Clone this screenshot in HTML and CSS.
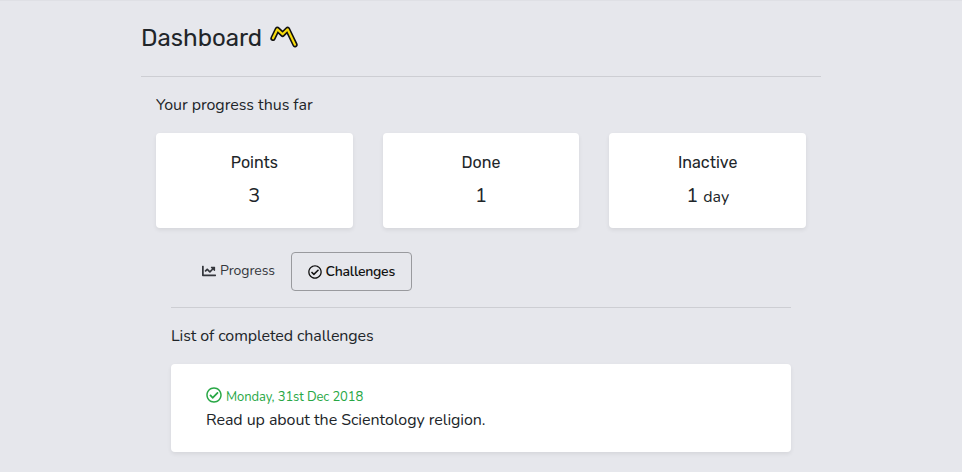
FILE: index.html
```html
<!DOCTYPE html>
<html lang="en">
<head>
<meta charset="utf-8">
<title>Dashboard</title>
<link rel="stylesheet" href="styles.css">
</head>
<body>
<svg width="0" height="0" class="sprite" aria-hidden="true">
  <symbol id="check" viewBox="0 0 512 512"><path d="M256 8C119.033 8 8 119.033 8 256s111.033 248 248 248 248-111.033 248-248S392.967 8 256 8zm0 48c110.532 0 200 89.451 200 200 0 110.532-89.451 200-200 200-110.532 0-200-89.451-200-200 0-110.532 89.451-200 200-200m140.204 130.267l-22.536-22.718c-4.667-4.705-12.265-4.736-16.97-.068L215.346 303.697l-59.792-60.277c-4.667-4.705-12.265-4.736-16.97-.069l-22.719 22.536c-4.705 4.667-4.736 12.265-.068 16.971l90.781 91.516c4.667 4.705 12.265 4.736 16.97.068l172.589-171.204c4.704-4.668 4.734-12.266.067-16.971z"/></symbol>
  <symbol id="chart" viewBox="0 0 512 512"><path d="M496 384H64V80c0-8.840-7.160-16-16-16H16C7.160 64 0 71.160 0 80v336c0 17.670 14.330 32 32 32h464c8.840 0 16-7.160 16-16v-32c0-8.840-7.160-16-16-16zM464 96H345.940c-21.380 0-32.090 25.850-16.970 40.970l32.400 32.400L288 242.750l-73.370-73.370c-12.500-12.500-32.760-12.500-45.250 0l-68.690 68.690c-6.250 6.250-6.250 16.380 0 22.630l22.620 22.620c6.250 6.250 16.380 6.250 22.630 0L192 237.250l73.370 73.370c12.500 12.500 32.760 12.500 45.250 0l96-96 32.400 32.400c15.120 15.120 40.970 4.410 40.970-16.970V112c.010-8.840-7.150-16-15.990-16z"/></symbol>
</svg>
<main class="page">
  <h1 class="title"><span>Dashboard</span>
    <svg class="mark" viewBox="0 0 30 24" aria-hidden="true"><path class="mark-edge" d="M4 13.300 8.300 4.300 13.600 9.300 18.600 4.300 26 19.700"/><path class="mark-fill" d="M4 13.300 8.300 4.300 13.600 9.300 18.600 4.300 26 19.700"/></svg>
  </h1>
  <section class="overview">
    <p>Your progress thus far</p>
    <div class="stats">
      <div class="card stat"><h2>Points</h2><p>3</p></div>
      <div class="card stat"><h2>Done</h2><p>1</p></div>
      <div class="card stat"><h2>Inactive</h2><p>1 <small>day</small></p></div>
    </div>
    <div class="details">
      <nav class="tabs">
        <a class="tab"><svg class="icon"><use href="#chart"/></svg><span>Progress</span></a>
        <a class="tab active"><svg class="icon"><use href="#check"/></svg><span>Challenges</span></a>
      </nav>
      <p class="list-lead">List of completed challenges</p>
      <article class="card challenge">
        <div class="date"><svg class="icon"><use href="#check"/></svg><span>Monday, 31st Dec 2018</span></div>
        <p>Read up about the Scientology religion.</p>
      </article>
    </div>
  </section>
</main>
</body>
</html>
```

FILE: styles.css
```css
* { box-sizing: border-box; }
body {
  margin: 0;
  height: 472px;
  overflow: hidden;
  background: #e6e7ec;
  border-top: 1px solid #dfe0e5;
  color: #212529;
  font: 400 16px/24px Nunito, Lato, sans-serif;
  letter-spacing: -.06px;
}
h1, h2, p { margin: 0; }
.sprite { position: absolute; }
.page { width: 680px; margin: 0 auto; }
.title {
  display: flex;
  height: 76px;
  padding-top: 23px;
  border-bottom: 1px solid #cdced3;
  font: 400 24px/29px Rubik, Roboto, sans-serif;
  letter-spacing: 0;
}
.mark { width: 30px; height: 24px; margin: 1px 0 0 7px; fill: none; stroke-linecap: round; stroke-linejoin: round; }
.mark-edge { stroke: #111; stroke-width: 5.400; }
.mark-fill { stroke: #f8dc0c; stroke-width: 2.200; }
.overview { padding: 16px 15px 0; }
.stats { display: grid; grid-template-columns: repeat(3, 1fr); gap: 30px; margin-top: 16px; }
.card { background: #fff; border-radius: 4px; box-shadow: 0 2px 4px rgba(0, 0, 0, .075); }
.stat { height: 95px; padding-top: 20px; text-align: center; }
.stat h2 { font: 400 16px/20px Rubik, Roboto, sans-serif; letter-spacing: 0; }
.stat p { margin-top: 8px; font-size: 20px; line-height: 30px; }
.stat small { font-size: 16px; }
.details { padding: 24px 15px 0; }
.tabs { display: flex; height: 56px; padding-left: 15px; border-bottom: 1px solid #cdced3; font-size: 14px; line-height: 21px; }
.tab { display: flex; align-items: center; height: 37px; padding: 0 16px; color: #34373c; }
.active { height: 39px; border: 1px solid #999a9e; border-radius: 4px; color: #111; font-weight: 600; letter-spacing: -.23px; }
.icon { width: 14px; height: 14px; margin-right: 4px; fill: currentColor; flex: none; }
.active .icon { margin-right: 3.500px; }
.list-lead { margin-top: 16px; letter-spacing: -.1px; }
.challenge { height: 88px; margin-top: 16px; padding: 20px 35px; }
.date { display: flex; height: 24px; color: #28a745; font-size: 13px; line-height: 26px; letter-spacing: -.1px; }
.date .icon { width: 16px; height: 16px; margin-top: 3px; }
```
